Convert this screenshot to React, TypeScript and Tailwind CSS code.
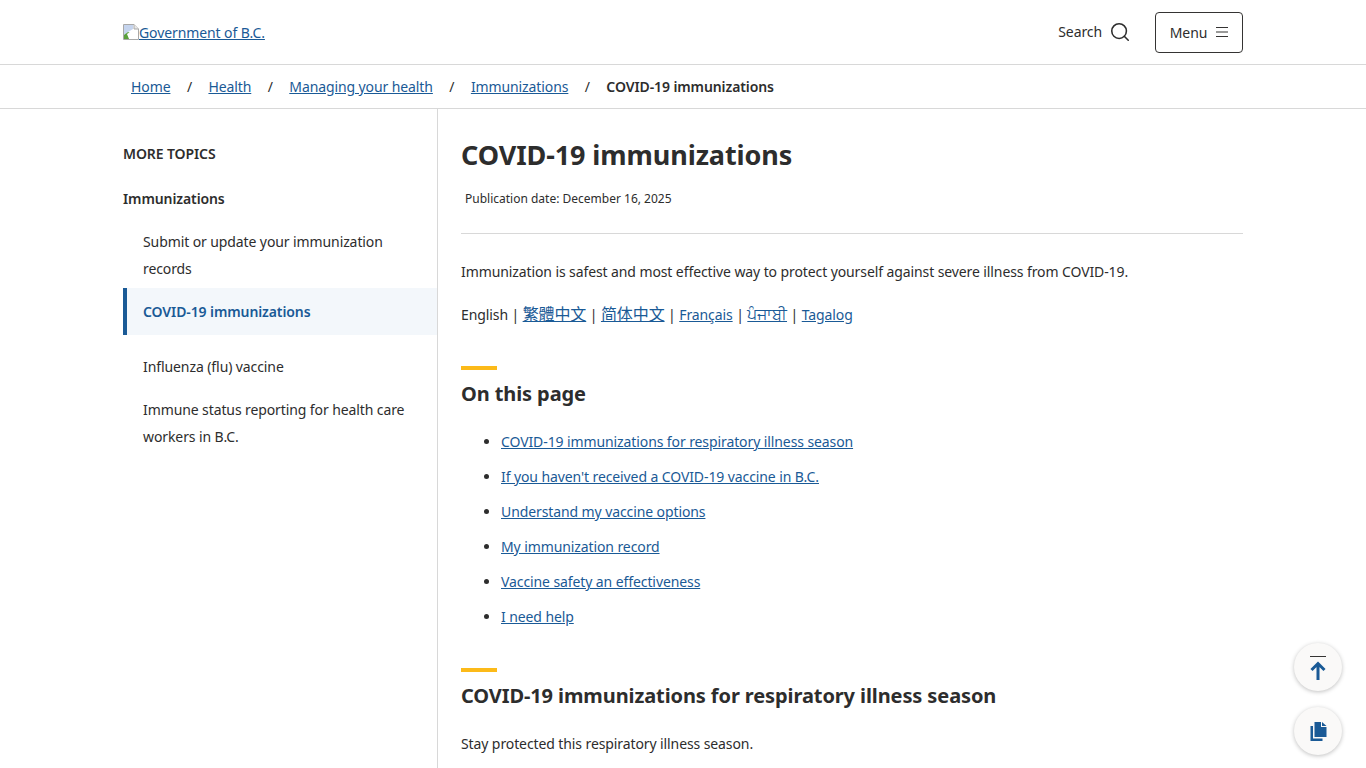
import { Search } from "lucide-react";

const crumbs = ["Home", "Health", "Managing your health", "Immunizations"];

const onThisPage = [
  "COVID-19 immunizations for respiratory illness season",
  "If you haven't received a COVID-19 vaccine in B.C.",
  "Understand my vaccine options",
  "My immunization record",
  "Vaccine safety an effectiveness",
  "I need help",
];

const linkClass = "text-[#1a5a96] underline";

function BrokenImage() {
  return (
    <svg width="16" height="16" viewBox="0 0 16 16" className="inline-block align-[-2px]">
      <path d="M0.5 0.5H11L15.5 5V15.5H0.5Z" fill="#fff" stroke="#a8a8a8" />
      <path d="M11 0.5V5H15.5" fill="#e8e8e8" stroke="#a8a8a8" />
      <path d="M1 1H10V5L5 8L1 12Z" fill="#c5d4ee" />
      <path d="M1 15V11L5 8L10 10L6 15Z" fill="#5aa03c" />
      <path d="M4 10L10 6H15V8L8 15H6Z" fill="#fff" />
    </svg>
  );
}

function AccentHeading({ children }: { children: string }) {
  return (
    <div>
      <div className="w-9 h-1 bg-[#fcba19]" />
      <h2 className="mt-[10px] text-[20px] leading-[28px] font-bold text-[#2d2d2d]">{children}</h2>
    </div>
  );
}

export default function App() {
  return (
    <div
      className="h-[768px] overflow-hidden bg-white text-[14px] tracking-[-0.1px] text-[#2d2d2d] relative [font-feature-settings:'liga','dlig']"
      style={{ fontFamily: '"Noto Sans", "Noto Sans CJK TC", sans-serif' }}
    >
      {/* Header */}
      <header className="h-[65px] border-b border-[#d8d8d8]">
        <div className="mx-auto w-[1120px] h-full flex items-center justify-between">
          <a className={linkClass}>
            <BrokenImage />
            Government of B.C.
          </a>
          <div className="flex items-center">
            <button className="flex items-center gap-[7px] text-[#2d2d2d] -mt-[1px]">
              Search
              <Search size={22} strokeWidth={1.7} />
            </button>
            <button className="ml-[24px] w-[88px] h-[41px] border border-[#353433] rounded flex items-center justify-center gap-[9px]">
              Menu
              <svg width="12" height="10" viewBox="0 0 12 10" stroke="#353433" strokeWidth="1">
                <path d="M0 0.5H12M0 5H12M0 9.5H12" />
              </svg>
            </button>
          </div>
        </div>
      </header>

      {/* Breadcrumb */}
      <nav className="h-[44px] border-b border-[#d8d8d8]">
        <div className="mx-auto w-[1120px] h-full pl-2 flex items-center">
          {crumbs.map((c) => (
            <span key={c} className="flex items-center">
              <a className={linkClass}>{c}</a>
              <span className="w-[38px] text-center">/</span>
            </span>
          ))}
          <span className="font-semibold">COVID-19 immunizations</span>
        </div>
      </nav>

      <div className="mx-auto w-[1120px] flex">
        {/* Sidebar */}
        <aside className="w-[315px] h-[660px] border-r border-[#d8d8d8] shrink-0 pt-[35px]">
          <div className="font-semibold leading-[19px]">MORE TOPICS</div>
          <div className="mt-[26px] font-semibold leading-[19px]">Immunizations</div>
          <a className="block mt-[20px] pl-5 pr-4 leading-[27px]">Submit or update your immunization records</a>
          <a className="block mt-[6px] h-[47px] bg-[#f3f7fb] border-l-[4px] border-[#1a5a96] pl-4 font-semibold text-[#1a5a96] leading-[47px]">
            COVID-19 immunizations
          </a>
          <a className="block mt-[18px] pl-5 leading-[27px]">Influenza (flu) vaccine</a>
          <a className="block mt-[16px] pl-5 pr-4 leading-[27px]">Immune status reporting for health care workers in B.C.</a>
        </aside>

        {/* Main */}
        <main className="flex-1 pl-[23px] pt-[27px]">
          <h1 className="text-[27px] leading-[38px] font-bold">COVID-19 immunizations</h1>
          <p className="mt-[17px] pl-1 text-[12px] tracking-normal leading-[16px]">Publication date: December 16, 2025</p>
          <hr className="mt-[26px] border-[#d8d8d8]" />
          <p className="mt-[28px] leading-[20px]">
            Immunization is safest and most effective way to protect yourself against severe illness from COVID-19.
          </p>
          <p className="mt-[21px] leading-[22px]">
            English | <a className={`${linkClass} text-[16px]`}>繁體中文</a> | <a className={`${linkClass} text-[16px]`}>简体中文</a> |{" "}
            <a className={linkClass}>Français</a> | <a className={`${linkClass} text-[16px]`}>ਪੰਜਾਬੀ</a> |{" "}
            <a className={linkClass}>Tagalog</a>
          </p>
          <div className="mt-[40px]">
            <AccentHeading>On this page</AccentHeading>
          </div>
          <ul className="mt-[24px] pl-10 list-disc flex flex-col gap-[15px]">
            {onThisPage.map((item) => (
              <li key={item} className="leading-[20px]">
                <a className={linkClass}>{item}</a>
              </li>
            ))}
          </ul>
          <div className="mt-[41px]">
            <AccentHeading>COVID-19 immunizations for respiratory illness season</AccentHeading>
          </div>
          <p className="mt-[24px] leading-[20px]">Stay protected this respiratory illness season.</p>
        </main>
      </div>

      {/* Floating buttons */}
      <div className="absolute right-[24px] top-[643px] flex flex-col gap-[16px]">
        <button className="w-12 h-12 rounded-full bg-[#faf9f8] shadow-[0_1px_4px_rgba(0,0,0,0.25)] flex items-center justify-center">
          <svg width="18" height="25" viewBox="0 0 18 25" fill="none" className="mt-[2px]">
            <path d="M1 0.5H17" stroke="#353433" strokeWidth="1" />
            <path d="M9 24V8M2.5 14L9 7.5L15.5 14" stroke="#1a5a96" strokeWidth="3" />
          </svg>
        </button>
        <button className="w-12 h-12 rounded-full bg-[#faf9f8] shadow-[0_1px_4px_rgba(0,0,0,0.25)] flex items-center justify-center">
          <svg width="17" height="19" viewBox="0 0 17 19" fill="#1a5a96">
            <path d="M4.5 0H11V5H16.5V15H4.5Z" />
            <path d="M12 0L16.5 4H12Z" />
            <path d="M0.5 4H3V16.5H12.5V19H0.5Z" />
          </svg>
        </button>
      </div>
    </div>
  );
}
